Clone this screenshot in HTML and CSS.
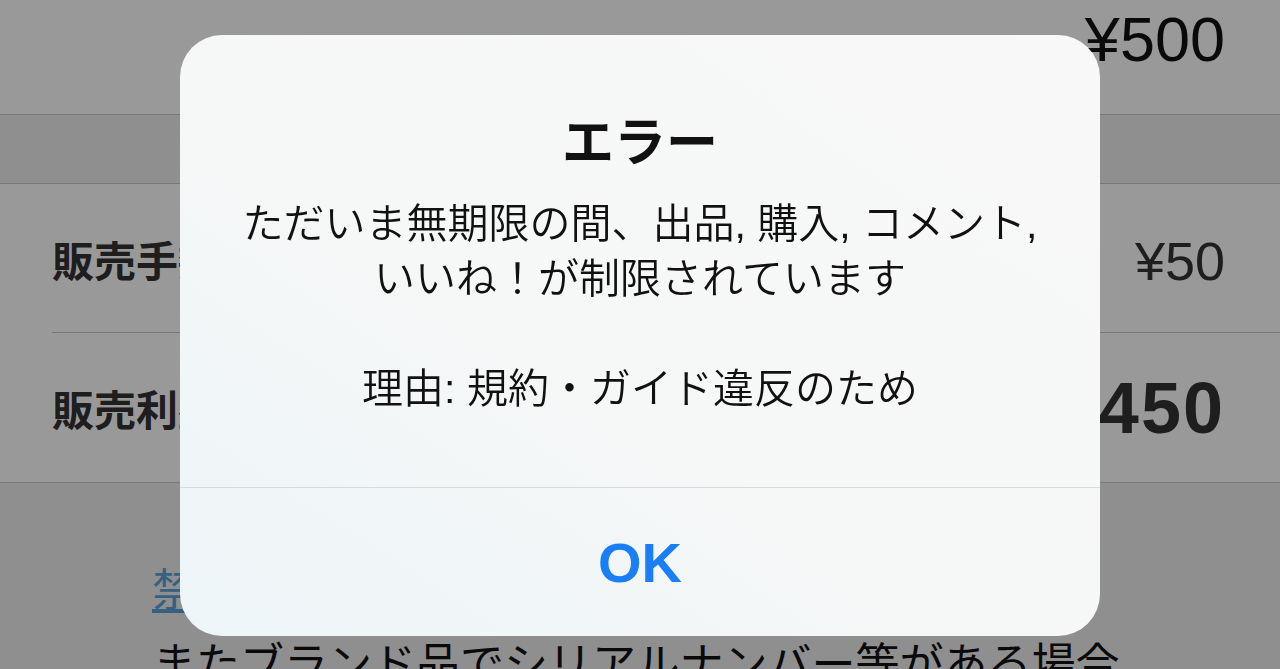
FILE: index.html
```
<!DOCTYPE html>
<html lang="ja">
<head>
    <meta charset="UTF-8">
    <meta name="viewport" content="width=device-width, initial-scale=1.0">
    <title>エラー</title>
    <link rel="stylesheet" href="styles.css">
</head>
<body>
    <div class="page">
        <div class="price-top"><span>¥500</span></div>
        <div class="band"></div>
        <div class="group">
            <div class="row">
                <span class="label">販売手数料</span>
                <span class="value">¥50</span>
            </div>
            <div class="row">
                <span class="label">販売利益</span>
                <span class="value strong">¥450</span>
            </div>
        </div>
        <div class="notes">
            <a href="#" class="notes-link">禁止されている出品物</a>
            <p>またブランド品でシリアルナンバー等がある場合</p>
        </div>
    </div>

    <!-- alert shown over the page -->
    <div class="overlay">
        <div class="alert">
            <div class="alert-body">
                <h1 class="alert-title">エラー</h1>
                <p class="alert-message">ただいま無期限の間、出品, 購入, コメント,<br>いいね！が制限されています<br><br>理由: 規約・ガイド違反のため</p>
            </div>
            <button class="alert-button">OK</button>
        </div>
    </div>
</body>
</html>
```

FILE: styles.css
```
html, body {
    margin: 0;
    padding: 0;
}
body {
    font-family: "Liberation Sans", "Noto Sans CJK JP", sans-serif;
    background: #efefef;
    height: 669px;
    overflow: hidden;
}
.page {
    width: 1280px;
}
.price-top {
    height: 115px;
    box-sizing: border-box;
    padding: 7px 55px 0 0;
    background: #fff;
    border-bottom: 1px solid #c8c8c8;
    display: flex;
    justify-content: flex-end;
    font-size: 63px;
    line-height: 64px;
    color: #111;
}
.band {
    height: 68px;
    background: #efefef;
}
.group {
    background: #fff;
    border-top: 1px solid #c8c8c8;
    border-bottom: 1px solid #c8c8c8;
}
.row {
    margin-left: 52px;
    padding-right: 55px;
    height: 148px;
    display: flex;
    align-items: center;
    justify-content: space-between;
}
.row + .row {
    border-top: 1px solid #c8c8c8;
    height: 149px;
}
.label {
    font-family: "Noto Sans CJK JP", sans-serif;
    font-weight: 700;
    font-size: 42px;
    color: #333;
}
.value {
    font-size: 54px;
    color: #333;
    padding-top: 6px;
}
.value.strong {
    font-weight: 700;
    font-size: 72px;
    letter-spacing: 2px;
    padding-top: 0;
}
.notes {
    padding: 74px 0 0 152px;
}
.notes-link {
    display: block;
    font-family: "Noto Sans CJK JP", sans-serif;
    font-size: 44px;
    line-height: 60px;
    color: #5aa0d8;
}
.notes p {
    margin: 14px 0 0;
    font-family: "Noto Sans CJK JP", sans-serif;
    font-size: 44px;
    line-height: 60px;
    color: #111;
    white-space: nowrap;
}

.overlay {
    position: fixed;
    inset: 0;
    background: rgba(0, 0, 0, 0.4);
    display: flex;
    justify-content: center;
    align-items: flex-start;
}
.alert {
    margin-top: 35px;
    width: 920px;
    border-radius: 42px;
    overflow: hidden;
    background: linear-gradient(to bottom left, #f8f8f8 0%, #f6f7f7 55%, #edf5f8 100%);
    text-align: center;
}
.alert-body {
    padding: 73px 40px 70px;
    border-bottom: 1px solid #d8dadb;
}
.alert-title {
    margin: 0;
    font-family: "Noto Sans CJK JP", sans-serif;
    font-weight: 700;
    font-size: 52px;
    line-height: 62px;
    color: #111;
}
.alert-message {
    margin: 27px 0 0;
    font-size: 41px;
    font-weight: 350;
    line-height: 55px;
    color: #111;
}
.alert-button {
    display: block;
    width: 100%;
    height: 148px;
    border: none;
    background: none;
    font-family: "Liberation Sans", sans-serif;
    font-weight: 700;
    font-size: 56px;
    color: #1a7ff6;
    cursor: pointer;
}
```
